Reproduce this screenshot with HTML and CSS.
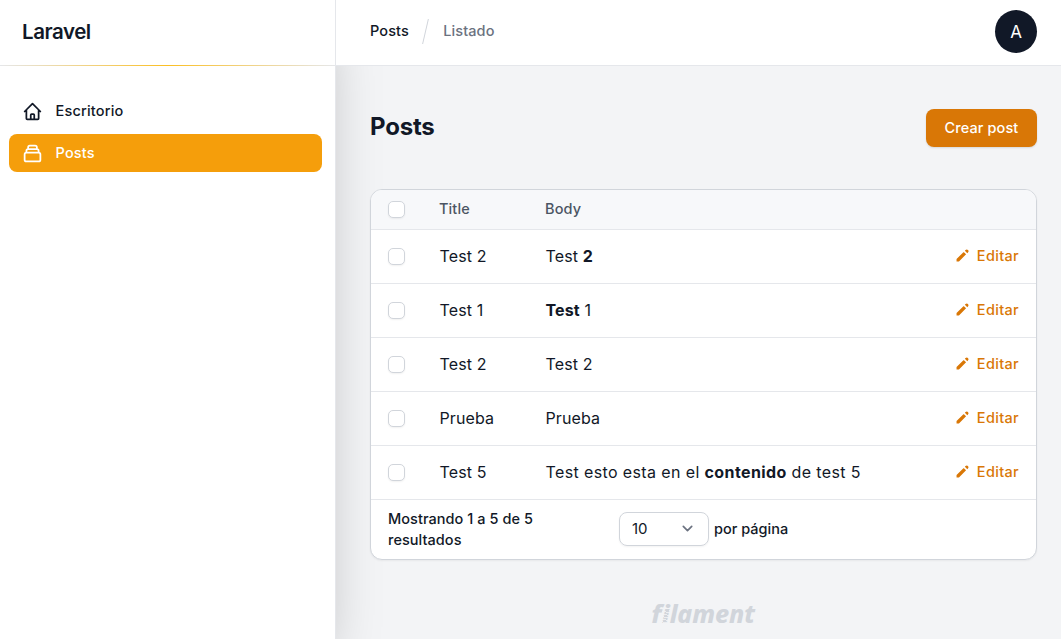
FILE: index.html
```
<!DOCTYPE html>
<html lang="es">
<head>
<meta charset="utf-8">
<title>Posts - Laravel</title>
<link rel="stylesheet" href="styles.css">
</head>
<body>
<svg class="defs" aria-hidden="true">
  <symbol id="pencil" viewBox="0 0 20 20"><path fill="currentColor" d="M13.586 3.586a2 2 0 112.828 2.828l-.793.793-2.828-2.828.793-.793zM11.379 5.793L3 14.172V17h2.828l8.38-8.379-2.83-2.828z"/></symbol>
</svg>
<div class="app">
  <aside class="sidebar">
    <header class="brand"><span class="brand-name">Laravel</span></header>
    <nav class="nav">
      <a class="nav-item">
        <svg class="nav-icon" viewBox="0 0 24 24" fill="none" stroke="currentColor" stroke-width="2" stroke-linecap="round" stroke-linejoin="round"><path d="M3 12l2-2m0 0l7-7 7 7M5 10v10a1 1 0 001 1h3m10-11l2 2m-2-2v10a1 1 0 01-1 1h-3m-6 0a1 1 0 001-1v-4a1 1 0 011-1h2a1 1 0 011 1v4a1 1 0 001 1m-6 0h6"/></svg>
        <span>Escritorio</span>
      </a>
      <a class="nav-item active">
        <svg class="nav-icon" viewBox="0 0 24 24" fill="none" stroke="currentColor" stroke-width="2" stroke-linecap="round" stroke-linejoin="round"><path d="M19 11H5m14 0a2 2 0 012 2v6a2 2 0 01-2 2H5a2 2 0 01-2-2v-6a2 2 0 012-2m14 0V9a2 2 0 00-2-2M5 11V9a2 2 0 012-2m0 0V5a2 2 0 012-2h6a2 2 0 012 2v2M7 7h10"/></svg>
        <span>Posts</span>
      </a>
    </nav>
  </aside>
  <div class="page">
    <header class="topbar">
      <div class="crumbs"><span class="crumb">Posts</span><i class="slash"></i><span class="crumb current">Listado</span></div>
      <div class="avatar">A</div>
    </header>
    <main class="main">
      <div class="heading"><h1>Posts</h1><button class="create">Crear post</button></div>
      <section class="table">
        <div class="row head"><i class="check"></i><span>Title</span><span>Body</span></div>
        <div class="row"><i class="check"></i><span>Test 2</span><span>Test <strong>2</strong></span><a class="edit"><svg><use href="#pencil"/></svg>Editar</a></div>
        <div class="row"><i class="check"></i><span>Test 1</span><span><strong>Test</strong> 1</span><a class="edit"><svg><use href="#pencil"/></svg>Editar</a></div>
        <div class="row"><i class="check"></i><span>Test 2</span><span>Test 2</span><a class="edit"><svg><use href="#pencil"/></svg>Editar</a></div>
        <div class="row"><i class="check"></i><span>Prueba</span><span>Prueba</span><a class="edit"><svg><use href="#pencil"/></svg>Editar</a></div>
        <div class="row"><i class="check"></i><span>Test 5</span><span class="long">Test esto esta en el <strong>contenido</strong> de test 5</span><a class="edit"><svg><use href="#pencil"/></svg>Editar</a></div>
        <footer class="pager">
          <div class="summary">Mostrando 1 a 5 de 5<br>resultados</div>
          <div class="select"><span>10</span><svg viewBox="0 0 20 20" fill="none" stroke="#6b7280" stroke-width="1.6" stroke-linecap="round" stroke-linejoin="round"><path d="M6 8l4 4 4-4"/></svg></div>
          <span class="per">por página</span>
        </footer>
      </section>
      <div class="logo"><span class="logo-f">f</span><span class="screw">i</span>lament</div>
    </main>
  </div>
</div>
</body>
</html>
```
FILE: styles.css
```
* { box-sizing: border-box; }
body { margin: 0; font-family: "Inter", "Liberation Sans", sans-serif; color: #111827; background: #f3f4f6; }
.defs { position: absolute; width: 0; height: 0; }
.app { display: flex; width: 1061px; height: 639px; overflow: hidden; }

.sidebar { width: 336px; flex: none; background: #fff; border-right: 1px solid #e5e7eb; box-shadow: 0 26px 52px -12px rgba(0,0,0,.25); }
.brand { height: 66px; padding: 0 22px; display: flex; align-items: center; border-bottom: 1px solid; border-image: linear-gradient(90deg, #e5e7eb, #fbbf24 50%, #e5e7eb) 1; }
.brand-name { font-size: 20.5px; font-weight: 600; letter-spacing: -.45px; line-height: 24px; padding-bottom: 2px; }
.nav { padding: 26px 13px 0 9px; display: flex; flex-direction: column; gap: 4px; }
.nav-item { height: 38px; padding: 0 13px; display: flex; align-items: center; gap: 12px; border-radius: 8px; font-size: 14.5px; font-weight: 500; letter-spacing: .18px; }
.nav-item span { padding: 0 0 2px .5px; }
.nav-icon { width: 21px; height: 21px; }
.active { background: #f59e0b; color: #fff; }

.page { flex: 1; min-width: 0; display: flex; flex-direction: column; }
.topbar { height: 66px; flex: none; z-index: 1; padding: 0 24px 0 34px; background: #fff; border-bottom: 1px solid #e5e7eb; display: flex; align-items: center; justify-content: space-between; }
.crumbs { display: flex; align-items: center; font-size: 14.5px; font-weight: 500; padding-bottom: 3px; letter-spacing: .1px; }
.crumb { padding-bottom: 2px; }
.slash { width: 1.3px; height: 25px; margin: 0 16.5px; background: #d1d5db; transform: skewX(-13deg); }
.current { color: #6b7280; }
.avatar { width: 42px; height: 43px; border-radius: 50%; background: #111827; color: #fff; font-size: 17px; display: flex; align-items: center; justify-content: center; margin-top: -2px; }

.main { padding: 43px 24px 0 34px; }
.heading { height: 38px; display: flex; justify-content: space-between; align-items: center; }
h1 { margin: 0 0 3px; font-size: 24px; line-height: 30px; font-weight: 650; letter-spacing: -.2px; }
.create { width: 111px; height: 38px; padding: 0 0 2px; border: 0; border-radius: 8px; background: #d97706; color: #fff; font: 500 14.5px "Inter", sans-serif; letter-spacing: .1px; box-shadow: 0 1px 2px rgba(0,0,0,.12); }

.table { margin-top: 42px; height: 371px; background: #fff; border: 1px solid #d1d5db; border-radius: 12px; overflow: hidden; box-shadow: 0 1px 2px rgba(0,0,0,.05); }
.row { display: grid; grid-template-columns: 52px 106px 1fr auto; align-items: center; height: 54px; padding: 0 17px 1px; border-bottom: 1px solid #e5e7eb; font-size: 16px; letter-spacing: .12px; white-space: nowrap; }
.row span { padding-bottom: 1px; margin-left: -.5px; }
.long { letter-spacing: .38px; }
.head { height: 40px; background: #f7f8fa; font-size: 14.5px; font-weight: 500; color: #4b5563; }
.row.head span { margin-left: -1px; }
.check { width: 17px; height: 17px; border: 1px solid #d1d5db; border-radius: 5px; background: #fff; box-shadow: 0 1px 2px rgba(0,0,0,.06); }
strong { font-weight: 700; }
.edit { display: flex; align-items: center; gap: 6px; color: #d97706; font-size: 14.5px; font-weight: 500; letter-spacing: .32px; padding-bottom: 1px; }
.edit svg { width: 17px; height: 17px; }
.pager { display: flex; align-items: center; height: 59px; padding: 0 17px 2px; font-size: 14.5px; font-weight: 500; line-height: 21px; }
.summary { width: 231px; letter-spacing: .05px; }
.select { width: 90px; height: 34px; padding: 0 10px 0 12px; display: flex; align-items: center; justify-content: space-between; border: 1px solid #d1d5db; border-radius: 8px; font-size: 15px; font-weight: 400; box-shadow: 0 1px 2px rgba(0,0,0,.05); }
.select svg { width: 21px; height: 21px; }
.per { margin-left: 5px; }

.logo { margin-top: 38px; text-align: center; font: italic 800 25px/30px "Noto Sans", sans-serif; letter-spacing: -.1px; color: #d1d5db; }
.logo-f { display: inline-block; font-style: normal; transform: skewX(-12deg); }
.screw { position: relative; }
/* threads cut across the stem of the i */
.screw::after { content: ""; position: absolute; left: 0; right: 0; top: 14px; height: 14px; background: repeating-linear-gradient(12deg, transparent 0 1.6px, rgba(243,244,246,.8) 1.6px 2.6px); }
```
